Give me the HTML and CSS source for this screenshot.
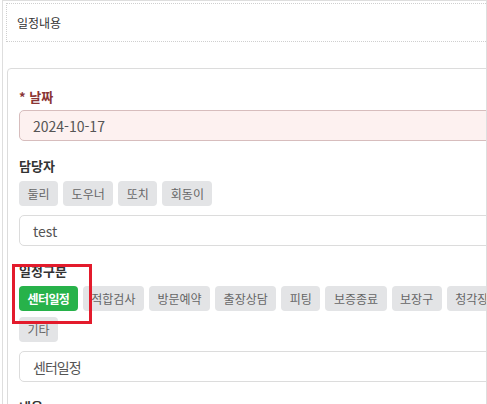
FILE: index.html
```html
<!DOCTYPE html>
<html lang="ko">
<head>
<meta charset="utf-8">
<title>일정내용</title>
<link rel="stylesheet" href="styles.css">
</head>
<body>
<div class="frame">
  <div class="header">일정내용</div>
  <div class="card">
    <div class="group first">
      <div class="label required">* 날짜</div>
      <div class="field date">2024-10-17</div>
    </div>
    <div class="group">
      <div class="label">담당자</div>
      <div class="chips">
        <span class="chip">둘리</span>
        <span class="chip">도우너</span>
        <span class="chip">또치</span>
        <span class="chip">회동이</span>
      </div>
      <div class="field">test</div>
    </div>
    <div class="group">
      <div class="label">일정구분</div>
      <div class="chips">
        <span class="chip active">센터일정</span>
        <span class="chip">적합검사</span>
        <span class="chip">방문예약</span>
        <span class="chip">출장상담</span>
        <span class="chip">피팅</span>
        <span class="chip">보증종료</span>
        <span class="chip">보장구</span>
        <span class="chip">청각장애</span>
        <span class="chip">기타</span>
      </div>
      <div class="field ko">센터일정</div>
    </div>
    <div class="group">
      <div class="label">내용</div>
    </div>
  </div>
  <div class="highlight"></div>
</div>
</body>
</html>
```
FILE: styles.css
```css
* { box-sizing: border-box; }
html, body { margin: 0; padding: 0; background: #fff; }
body {
  font-family: "Noto Sans CJK KR", "Noto Sans", sans-serif;
  color: #333;
}
.frame {
  position: relative;
  margin-left: 2px;
  width: 485px;
  height: 404px;
  border: 1px solid #dedede;
  border-bottom: none;
  overflow: hidden;
}
.header {
  margin: 2px 0 0 3px;
  height: 39px;
  border: 1px dotted #cfcfcf;
  border-right: none;
  padding-left: 10px;
  display: flex;
  align-items: center;
  font-size: 12px;
  color: #333;
}
.card {
  margin: 26px 0 0 4px;
  width: 535px;
  border: 1px solid #dcdcdc;
  border-radius: 4px;
  padding: 19px 11px 20px 11px;
}
.group { margin-top: 16px; }
.group.first { margin-top: 0; }
.label {
  font-size: 13px;
  line-height: 18px;
  font-weight: bold;
  color: #333;
  margin-bottom: 6px;
}
.label.required { color: #8a3535; margin-bottom: 4px; }
.field {
  height: 31px;
  border: 1px solid #dcdcdc;
  border-radius: 5px;
  padding-left: 13px;
  display: flex;
  align-items: center;
  font-size: 14px;
  color: #555;
}
.field.date {
  background: #fdf1f0;
  border-color: #d7bdbd;
}
.field.ko { letter-spacing: -1px; }
.chips {
  display: flex;
  flex-wrap: wrap;
  gap: 6px 5px;
  margin-bottom: 9px;
}
.chip {
  height: 25px;
  padding: 0 8.5px;
  display: inline-flex;
  align-items: center;
  background: #e3e4e6;
  border-radius: 4px;
  font-size: 12px;
  color: #666;
}
.chip.active {
  background: #27b24a;
  color: #fff;
  font-weight: bold;
  letter-spacing: -0.6px;
}
.highlight {
  position: absolute;
  left: 9px;
  top: 263px;
  width: 80px;
  height: 60px;
  border: 3px solid #e31b2c;
}
```
